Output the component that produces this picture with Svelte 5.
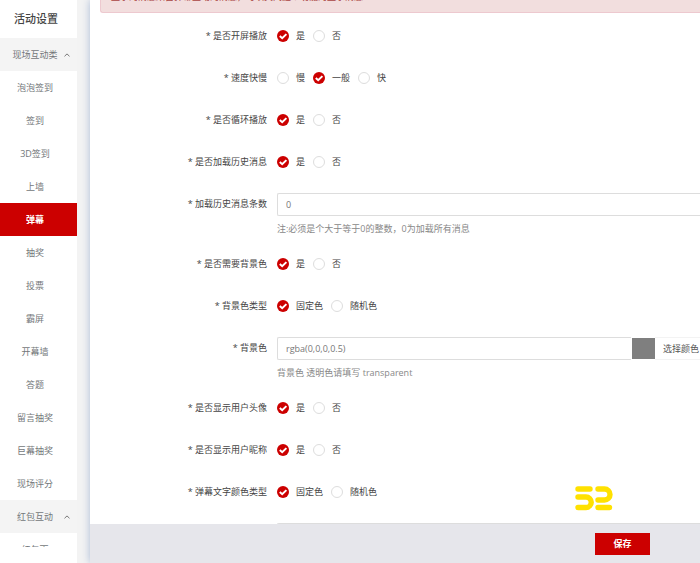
<script lang="ts">
  type Field = {
    id: string;
    label: string;
    options?: string[];
    value: string;
    hint?: string;
    color?: boolean;
  };

  const games = [
    "泡泡签到",
    "签到",
    "3D签到",
    "上墙",
    "弹幕",
    "抽奖",
    "投票",
    "霸屏",
    "开幕墙",
    "答题",
    "留言抽奖",
    "巨幕抽奖",
    "现场评分",
  ];

  let active = $state("弹幕");

  let fields: Field[] = $state([
    { id: "open", label: "是否开屏播放", options: ["是", "否"], value: "是" },
    { id: "speed", label: "速度快慢", options: ["慢", "一般", "快"], value: "一般" },
    { id: "loop", label: "是否循环播放", options: ["是", "否"], value: "是" },
    { id: "history", label: "是否加载历史消息", options: ["是", "否"], value: "是" },
    {
      id: "count",
      label: "加载历史消息条数",
      value: "0",
      hint: "注:必须是个大于等于0的整数，0为加载所有消息",
    },
    { id: "bg", label: "是否需要背景色", options: ["是", "否"], value: "是" },
    { id: "bgtype", label: "背景色类型", options: ["固定色", "随机色"], value: "固定色" },
    {
      id: "bgcolor",
      label: "背景色",
      value: "rgba(0,0,0,0.5)",
      hint: "背景色 透明色请填写 transparent",
      color: true,
    },
    { id: "avatar", label: "是否显示用户头像", options: ["是", "否"], value: "是" },
    { id: "nick", label: "是否显示用户昵称", options: ["是", "否"], value: "是" },
    { id: "texttype", label: "弹幕文字颜色类型", options: ["固定色", "随机色"], value: "固定色" },
    { id: "textcolor", label: "弹幕文字颜色", value: "" },
  ]);
</script>

{#snippet group(name: string)}
  <button class="group">
    <span>{name}</span>
    <svg viewBox="0 0 6 4" aria-hidden="true"><path d="M0.5 3.3 3 0.9l2.5 2.4" /></svg>
  </button>
{/snippet}

<div class="page">
  <nav class="sidebar">
    <h1>活动设置</h1>
    {@render group("现场互动类")}
    {#each games as g (g)}
      <button class="item" class:active={active === g} onclick={() => (active = g)}>{g}</button>
    {/each}
    {@render group("红包互动")}
    <div class="peek"><button class="item">红包雨</button></div>
  </nav>

  <main>
    <form onsubmit={(ev) => ev.preventDefault()}>
      <div class="scroll">
        <div class="alert"><span>显示的消息来自弹幕互动的消息，可以关闭这个功能的显示消息</span></div>
        {#each fields as f (f.id)}
          {#if f.options}
            <div class="row" role="radiogroup" aria-labelledby={`${f.id}-label`}>
              <span class="label" id={`${f.id}-label`}>* {f.label}</span>
              <div class="options">
                {#each f.options as o (o)}
                  <label class="option">
                    <input type="radio" name={f.id} value={o} bind:group={f.value} />
                    <span class="dot">
                      <svg viewBox="0 0 12 12" aria-hidden="true"><path d="M2.8 6 5.2 8.2l4.2-4.1" /></svg>
                    </span>
                    <span>{o}</span>
                  </label>
                {/each}
              </div>
            </div>
          {:else}
            <div class="row tall">
              <label class="label" for={f.id}>* {f.label}</label>
              <div class="control">
                <div class="line">
                  <input class="text" id={f.id} type="text" bind:value={f.value} />
                  {#if f.color}
                    <span class="swatch" style:background={f.value}></span>
                    <button class="pick" type="button">选择颜色</button>
                  {/if}
                </div>
                {#if f.hint}<p class="hint">{f.hint}</p>{/if}
              </div>
            </div>
          {/if}
        {/each}
      </div>
      <footer>
        <button class="save" type="submit">保存</button>
      </footer>
    </form>
    <svg class="mark" viewBox="0 0 38 25" aria-hidden="true">
      <path d="M3 3H15M3 11H11A5 5 0 0 1 11 21.5H3M23 3H29.5A5.5 5.5 0 0 1 29.5 14H23M23 21.5H34.5" />
    </svg>
  </main>
</div>

<style>
  :global(body) {
    margin: 0;
    background: #f3f3f3;
    color: #444;
    font-family: "Open Sans", "Noto Sans CJK SC", sans-serif;
    font-size: 9px;
    line-height: 12px;
  }

  button,
  input {
    font: inherit;
    color: inherit;
    margin: 0;
    box-sizing: border-box;
  }

  button {
    border: 0;
    cursor: pointer;
  }

  .page {
    display: flex;
    height: 100vh;
    overflow: hidden;
  }

  .sidebar {
    flex: 0 0 77px;
    background: #fff;
    overflow: hidden;
  }

  h1 {
    margin: 0;
    padding-left: 14px;
    font-size: 11px;
    font-weight: 500;
    line-height: 38px;
  }

  .group,
  .item {
    display: grid;
    align-items: center;
    justify-items: center;
    width: 100%;
    height: 33px;
    padding: 0 7px 0 0;
    background: #fff;
    color: #73777a;
  }

  .group {
    background: #f4f4f4;
  }

  .group span,
  .group svg {
    grid-area: 1 / 1;
  }

  .group svg {
    justify-self: end;
    width: 6px;
    height: 4px;
    fill: none;
    stroke: #777;
  }

  .item.active {
    background: #c00;
    color: #fff;
    font-weight: 700;
  }

  .peek {
    height: 14px;
    overflow: hidden;
  }

  main {
    position: relative;
    flex: 1;
    min-width: 0;
    margin-left: 13px;
    background: #fff;
    box-shadow: 0 0 8px #a9bad6;
  }

  form {
    display: flex;
    flex-direction: column;
    height: 100%;
  }

  .scroll {
    flex: 1;
    min-height: 0;
    overflow: hidden;
  }

  .alert {
    display: flex;
    align-items: flex-end;
    height: 13px;
    box-sizing: border-box;
    margin: 0 0 2px 10px;
    padding: 0 10px 9px;
    overflow: hidden;
    border: 1px solid #edc9cf;
    border-width: 0 0 1px 1px;
    border-radius: 0 0 0 3px;
    background: #f2dede;
    color: #a94442;
  }

  .row {
    display: flex;
    align-items: center;
    height: 42px;
  }

  .row.tall {
    align-items: flex-start;
    height: 60px;
    padding-top: 10px;
    box-sizing: border-box;
  }

  .label {
    flex: 0 0 177px;
    margin-right: 10px;
    text-align: right;
  }

  .tall .label {
    line-height: 22px;
  }

  .options,
  .option,
  .line {
    display: flex;
    align-items: center;
  }

  .options {
    gap: 8px;
  }

  .option {
    position: relative;
    gap: 7px;
  }

  .option input {
    position: absolute;
    inset: 0;
    opacity: 0;
  }

  .dot {
    display: flex;
    width: 12px;
    height: 12px;
    box-sizing: border-box;
    border: 1px solid #ddd;
    border-radius: 50%;
  }

  .dot svg {
    display: none;
    width: 12px;
    height: 12px;
    fill: none;
    stroke: #fff;
    stroke-width: 2;
  }

  .option input:checked + .dot {
    border: 0;
    background: #c00;
  }

  .option input:checked + .dot svg {
    display: block;
  }

  .control {
    flex: 1;
    min-width: 0;
  }

  .text {
    flex: 1;
    min-width: 0;
    height: 23px;
    padding: 0 8px;
    border: 1px solid #ddd;
    border-right: 0;
    border-radius: 2px 0 0 2px;
    background: #fff;
    color: #777;
  }

  .swatch {
    width: 23px;
    height: 21px;
    margin-left: 1px;
  }

  .pick {
    height: 23px;
    padding: 0 1px 0 8px;
    background: #fff;
    border: solid #f3f3f3;
    border-width: 1px 0;
    color: #555;
  }

  .hint {
    margin: 7px 0 0;
    color: #888;
  }

  footer {
    display: flex;
    align-items: center;
    justify-content: flex-end;
    height: 39px;
    padding-right: 50px;
    background: #e6e6eb;
  }

  .save {
    width: 55px;
    height: 22px;
    padding: 0;
    background: #c00;
    color: #fff;
    font-weight: 700;
  }

  /* floats over the form */
  .mark {
    position: absolute;
    right: 87px;
    bottom: 52px;
    width: 38px;
    height: 25px;
    fill: none;
    stroke: #ffe100;
    stroke-width: 5.4;
    stroke-linecap: round;
  }
</style>
